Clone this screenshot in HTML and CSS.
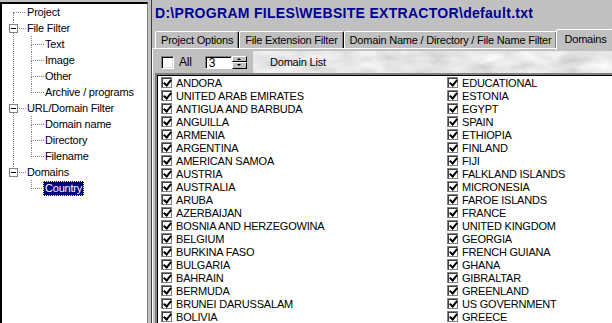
FILE: index.html
```html
<!DOCTYPE html>
<html lang="en">
<head>
    <meta charset="UTF-8">
    <title>Website Extractor - Domains</title>
    <link rel="stylesheet" href="styles.css">
</head>
<body>
    <div class="window">
        <div class="tree-pane">
            <ul class="tree">
                <li><span class="label">Project</span></li>
                <li class="open"><span class="expander"></span><span class="label">File Filter</span>
                    <ul>
                        <li><span class="label">Text</span></li>
                        <li><span class="label">Image</span></li>
                        <li><span class="label">Other</span></li>
                        <li><span class="label">Archive / programs</span></li>
                    </ul>
                </li>
                <li class="open"><span class="expander"></span><span class="label">URL/Domain Filter</span>
                    <ul>
                        <li><span class="label">Domain name</span></li>
                        <li><span class="label">Directory</span></li>
                        <li><span class="label">Filename</span></li>
                    </ul>
                </li>
                <li class="open"><span class="expander"></span><span class="label">Domains</span>
                    <ul>
                        <li><span class="label selected">Country</span></li>
                    </ul>
                </li>
            </ul>
        </div>

        <div class="splitter"></div>

        <div class="main">
            <h1 class="path">D:\PROGRAM FILES\WEBSITE EXTRACTOR\default.txt</h1>

            <div class="tabs">
                <div class="tab">Project Options</div>
                <div class="tab">File Extension Filter</div>
                <div class="tab">Domain Name / Directory / File Name Filter</div>
                <div class="tab active">Domains</div>
            </div>

            <div class="tab-panel">
                <div class="toolbar">
                    <div class="toolbar-left">
                        <span class="box-check"></span>
                        <span class="all-label">All</span>
                        <div class="spin">
                            <span class="spin-value">3</span>
                            <div class="spin-buttons">
                                <span class="spin-btn up"></span>
                                <span class="spin-btn down"></span>
                            </div>
                        </div>
                    </div>
                    <div class="toolbar-marble">
                        <svg class="marble" width="100%" height="100%">
                            <filter id="stone">
                                <feTurbulence type="fractalNoise" baseFrequency="0.03 0.08" numOctaves="4" seed="7"/>
                                <feColorMatrix type="matrix" values="0.5 0 0 0 0.54  0.5 0 0 0 0.54  0.5 0 0 0 0.54  0 0 0 0 1"/>
                            </filter>
                            <rect width="100%" height="100%" filter="url(#stone)"/>
                        </svg>
                        <span class="list-title">Domain List</span>
                    </div>
                </div>

                <div class="domain-list">
                    <ul class="column">
                        <li><span class="check"></span>ANDORA</li>
                        <li><span class="check"></span>UNITED ARAB EMIRATES</li>
                        <li><span class="check"></span>ANTIGUA AND BARBUDA</li>
                        <li><span class="check"></span>ANGUILLA</li>
                        <li><span class="check"></span>ARMENIA</li>
                        <li><span class="check"></span>ARGENTINA</li>
                        <li><span class="check"></span>AMERICAN SAMOA</li>
                        <li><span class="check"></span>AUSTRIA</li>
                        <li><span class="check"></span>AUSTRALIA</li>
                        <li><span class="check"></span>ARUBA</li>
                        <li><span class="check"></span>AZERBAIJAN</li>
                        <li><span class="check"></span>BOSNIA AND HERZEGOWINA</li>
                        <li><span class="check"></span>BELGIUM</li>
                        <li><span class="check"></span>BURKINA FASO</li>
                        <li><span class="check"></span>BULGARIA</li>
                        <li><span class="check"></span>BAHRAIN</li>
                        <li><span class="check"></span>BERMUDA</li>
                        <li><span class="check"></span>BRUNEI DARUSSALAM</li>
                        <li><span class="check"></span>BOLIVIA</li>
                    </ul>
                    <ul class="column">
                        <li><span class="check"></span>EDUCATIONAL</li>
                        <li><span class="check"></span>ESTONIA</li>
                        <li><span class="check"></span>EGYPT</li>
                        <li><span class="check"></span>SPAIN</li>
                        <li><span class="check"></span>ETHIOPIA</li>
                        <li><span class="check"></span>FINLAND</li>
                        <li><span class="check"></span>FIJI</li>
                        <li><span class="check"></span>FALKLAND ISLANDS</li>
                        <li><span class="check"></span>MICRONESIA</li>
                        <li><span class="check"></span>FAROE ISLANDS</li>
                        <li><span class="check"></span>FRANCE</li>
                        <li><span class="check"></span>UNITED KINGDOM</li>
                        <li><span class="check"></span>GEORGIA</li>
                        <li><span class="check"></span>FRENCH GUIANA</li>
                        <li><span class="check"></span>GHANA</li>
                        <li><span class="check"></span>GIBRALTAR</li>
                        <li><span class="check"></span>GREENLAND</li>
                        <li><span class="check"></span>US GOVERNMENT</li>
                        <li><span class="check"></span>GREECE</li>
                    </ul>
                </div>
            </div>
        </div>
    </div>
</body>
</html>
```

FILE: styles.css
```css
* {
    box-sizing: border-box;
}

html, body {
    margin: 0;
    padding: 0;
}

body {
    width: 612px;
    height: 323px;
    overflow: hidden;
    background-color: #c0c0c0;
    font-family: "Liberation Sans", Arial, sans-serif;
    font-size: 11px;
    letter-spacing: -0.2px;
    color: #000;
}

.window {
    display: flex;
    height: 323px;
    overflow: hidden;
}

/* left tree view */
.tree-pane {
    width: 148px;
    height: 321px;
    margin-top: 2px;
    background-color: #fff;
    border-style: solid;
    border-width: 2px 1px 0 2px;
    border-color: #000 #808080 #000 #000;
    overflow: hidden;
}

.tree,
.tree ul {
    list-style: none;
    margin: 0;
    padding: 0;
}

.tree li {
    position: relative;
    padding-left: 23px;
    line-height: 16px;
}

.tree li li {
    padding-left: 18px;
}

/* connector lines */
.tree li::before {
    content: '';
    position: absolute;
    left: 11px;
    top: 0;
    width: 12px;
    height: 8px;
    border-left: 1px dotted #808080;
    border-bottom: 1px dotted #808080;
}

.tree li li::before {
    left: 6px;
    width: 12px;
}

.tree > li:first-child::before {
    border-left: none;
}

.tree li:not(:last-child)::after {
    content: '';
    position: absolute;
    left: 11px;
    top: 8px;
    bottom: 0;
    border-left: 1px dotted #808080;
}

.tree li li:not(:last-child)::after {
    left: 6px;
}

.expander {
    position: absolute;
    left: 7px;
    top: 4px;
    width: 9px;
    height: 9px;
    background-color: #fff;
    border: 1px solid #808080;
    z-index: 1;
}

.expander::after {
    content: '';
    position: absolute;
    left: 1px;
    top: 3px;
    width: 5px;
    height: 1px;
    background-color: #000;
}

.label {
    display: inline-block;
    padding: 0 2px;
    height: 16px;
}

.label.selected {
    background-color: #000080;
    color: #fff;
    outline: 1px dotted #ffff80;
    outline-offset: -1px;
    height: 15px;
    line-height: 15px;
}

.splitter {
    width: 4px;
    border-left: 1px solid #c0c0c0;
    border-right: 1px solid #404040;
}

/* right side */
.main {
    flex: 1;
    min-width: 0;
    overflow: hidden;
}

.path {
    margin: 0;
    padding-left: 3px;
    height: 27px;
    line-height: 27px;
    font-size: 14px;
    font-weight: bold;
    letter-spacing: 0.3px;
    color: #000090;
    white-space: nowrap;
}

.tabs {
    display: flex;
    align-items: flex-end;
    padding-left: 3px;
    height: 21px;
    position: relative;
    z-index: 1;
}

.tab {
    height: 17px;
    padding: 0 5px;
    line-height: 16px;
    white-space: nowrap;
    background-color: #c0c0c0;
    border-top: 1px solid #fff;
    border-left: 1px solid #fff;
    border-right: 1px solid #000;
    box-shadow: inset -1px 0 0 #808080;
    border-top-left-radius: 2px;
    border-top-right-radius: 2px;
}

.tab.active {
    height: 21px;
    margin-left: -1px;
    margin-bottom: -2px;
    padding: 0 7px;
    line-height: 19px;
}

.tab-panel {
    border-top: 1px solid #fff;
    border-left: 1px solid #fff;
    padding: 2px 0 0 2px;
}

.toolbar {
    display: flex;
    height: 22px;
}

.toolbar-left {
    width: 98px;
    display: flex;
    align-items: center;
    padding-left: 6px;
}

.box-check {
    width: 13px;
    height: 13px;
    background-color: #fff;
    border-style: solid;
    border-width: 1px;
    border-color: #808080 #fff #fff #808080;
    box-shadow: inset 1px 1px 0 #000, inset -1px -1px 0 #dfdfdf;
}

.all-label {
    margin-left: 5px;
    font-size: 12px;
}

.spin {
    display: flex;
    margin-left: 13px;
}

.spin-value {
    width: 27px;
    height: 13px;
    padding-left: 3px;
    line-height: 12px;
    font-size: 12px;
    background-color: #fff;
    border-style: solid;
    border-width: 1px;
    border-color: #808080 #fff #fff #808080;
    box-shadow: inset 1px 1px 0 #000;
}

.spin-buttons {
    display: flex;
    flex-direction: column;
    width: 15px;
    height: 13px;
}

.spin-btn {
    position: relative;
    flex: 1;
    border: 1px solid;
    border-color: #fff #000 #000 #fff;
    background-color: #c0c0c0;
}

.spin-btn::after {
    content: '';
    position: absolute;
    left: 4px;
    top: 1px;
    border-left: 2px solid transparent;
    border-right: 2px solid transparent;
}

.spin-btn.up::after {
    border-bottom: 2px solid #000;
}

.spin-btn.down::after {
    border-top: 2px solid #000;
}

.toolbar-marble {
    flex: 1;
    position: relative;
    display: flex;
    align-items: center;
    padding-left: 17px;
    overflow: hidden;
}

.marble {
    position: absolute;
    left: 0;
    top: 0;
}

.list-title {
    position: relative;
    font-size: 11px;
}

/* domain check list */
.domain-list {
    display: grid;
    grid-template-columns: 286px 1fr;
    height: 251px;
    overflow: hidden;
    padding: 1px 0 0 4px;
    background-color: #fff;
    border-style: solid;
    border-width: 2px 0 0 2px;
    border-color: #808080;
    box-shadow: inset 1px 1px 0 #000;
}

.column {
    list-style: none;
    margin: 0;
    padding: 0;
}

.column li {
    display: flex;
    align-items: center;
    height: 13px;
    white-space: nowrap;
}

.check {
    position: relative;
    width: 11px;
    height: 11px;
    margin-right: 4px;
    background-color: #fff;
    border: 1px solid #808080;
    box-shadow: inset 1px 1px 0 #404040;
}

.check::after {
    content: '';
    position: absolute;
    left: 3px;
    top: 0;
    width: 3px;
    height: 6px;
    border: solid #000;
    border-width: 0 2px 2px 0;
    transform: rotate(40deg);
}
```
